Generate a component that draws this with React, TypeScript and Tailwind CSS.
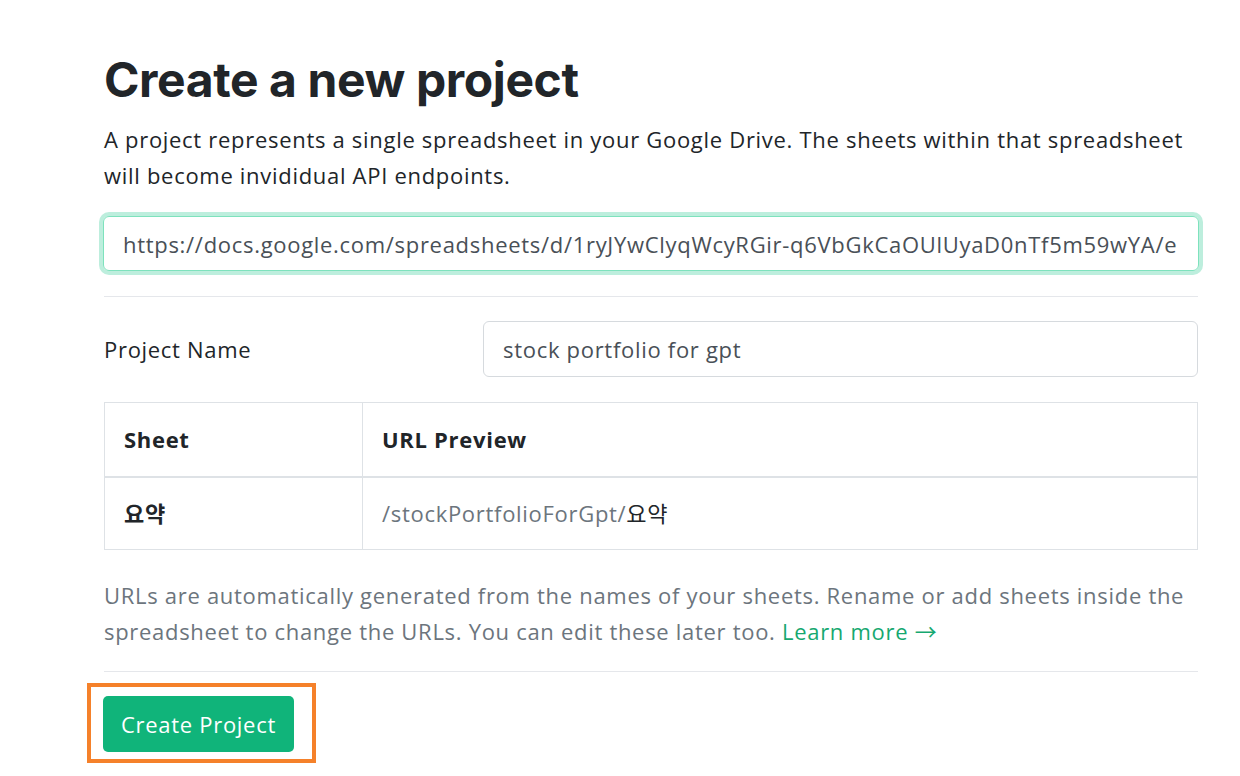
import React from 'react'

const body = '"Open Sans", "Noto Sans CJK KR", sans-serif'

export default function App() {
  return (
    <div className="min-h-screen bg-white tracking-[0.7px]" style={{ fontFamily: body }}>
      <div className="ml-[104px] w-[1094px] pt-[50px]">
        <h1
          className="text-[48px] leading-[60px] font-bold tracking-[-0.4px] text-[#212529]"
          style={{ fontFamily: 'Inter, "Liberation Sans", sans-serif' }}
        >
          Create a new project
        </h1>

        <p className="mt-[11px] text-[22px] leading-[36px] text-[#212529]">
          A project represents a single spreadsheet in your Google Drive. The sheets within that spreadsheet
          will become invididual API endpoints.
        </p>

        <div className="mt-[23px] -mx-px">
          <input
            readOnly
            value="https://docs.google.com/spreadsheets/d/1ryJYwClyqWcyRGir-q6VbGkCaOUlUyaD0nTf5m59wYA/e"
            className="w-full h-[55px] rounded-[6px] border border-[#7ee2bd] px-[19px] text-[22px] tracking-[0.7px] text-[#495057] outline-none ring-4 ring-[#bdeedd]"
            style={{ fontFamily: body }}
          />
        </div>

        <div className="mt-[25px] border-t border-[#e5e7eb]" />

        <div className="mt-[24px] flex items-center">
          <label className="w-[379px] text-[22px] text-[#212529]">Project Name</label>
          <input
            readOnly
            value="stock portfolio for gpt"
            className="flex-1 h-[56px] rounded-[6px] border border-[#d6dade] px-[19px] text-[22px] tracking-[0.7px] text-[#495057] outline-none"
            style={{ fontFamily: body }}
          />
        </div>

        <table className="mt-[25px] w-full border-collapse border border-[#dee2e6] text-[22px]">
          <thead>
            <tr className="h-[74px] border-b-2 border-[#dee2e6]">
              <th className="w-[258px] border-r border-[#dee2e6] px-[19px] text-left font-bold text-[#212529]">Sheet</th>
              <th className="px-[19px] text-left font-bold text-[#212529]">URL Preview</th>
            </tr>
          </thead>
          <tbody>
            <tr className="h-[73px]">
              <td className="border-r border-[#dee2e6] px-[19px] font-bold text-[#212529]">요약</td>
              <td className="px-[19px] text-[#212529]">
                <span className="text-[#6c757d]">/stockPortfolioForGpt/</span>요약
              </td>
            </tr>
          </tbody>
        </table>

        <p className="mt-[27px] text-[22px] leading-[36px] text-[#6c757d]">
          URLs are automatically generated from the names of your sheets. Rename or add sheets inside the
          spreadsheet to change the URLs. You can edit these later too.{' '}
          <a className="text-[#16a870]">Learn more →</a>
        </p>

        <div className="mt-[22px] border-t border-[#e5e7eb]" />

        <div className="relative mt-[24px] ml-[-1px] inline-block">
          <button className="h-[56px] w-[191px] rounded-[5px] bg-[#10b47a] text-[22px] tracking-[0.7px] text-white">
            Create Project
          </button>
          <div className="pointer-events-none absolute -left-[16px] -right-[22px] -top-[13px] -bottom-[11px] border-4 border-[#f5812a]" />
        </div>
      </div>
    </div>
  )
}
